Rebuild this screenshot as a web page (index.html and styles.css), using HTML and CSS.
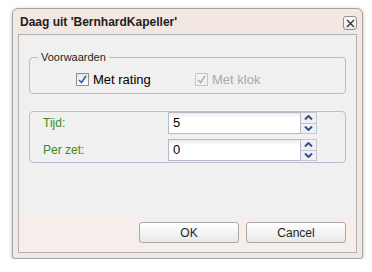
FILE: index.html
```html
<!DOCTYPE html>
<html lang="nl">
<head>
    <meta charset="UTF-8">
    <title>Daag uit</title>
    <link rel="stylesheet" href="styles.css">
</head>
<body>
    <div class="dialog">
        <div class="titlebar">
            <span class="title">Daag uit 'BernhardKapeller'</span>
            <button class="close" title="Sluiten">
                <svg width="9" height="9" viewBox="0 0 9 9"><path d="M1 1L8 8M8 1L1 8" stroke="#333" stroke-width="1.4"/></svg>
            </button>
        </div>

        <div class="panel">
            <div class="content">
                <fieldset class="group">
                    <legend>Voorwaarden</legend>
                    <div class="checks">
                        <label class="check">
                            <span class="box">
                                <svg width="9" height="9" viewBox="0 0 9 9"><path d="M1 5L3.5 7.5L8 1" fill="none" stroke="#3c5aa8" stroke-width="1.6"/></svg>
                            </span>
                            Met rating
                        </label>
                        <label class="check disabled">
                            <span class="box">
                                <svg width="9" height="9" viewBox="0 0 9 9"><path d="M1 5L3.5 7.5L8 1" fill="none" stroke="#a9b0c4" stroke-width="1.6"/></svg>
                            </span>
                            Met klok
                        </label>
                    </div>
                </fieldset>

                <div class="group fields">
                    <div class="row">
                        <span class="label">Tijd:</span>
                        <div class="spin">
                            <span class="value">5</span>
                            <div class="arrows">
                                <span class="arrow"><svg width="9" height="5" viewBox="0 0 9 5"><path d="M1 4.5L4.5 1L8 4.5" fill="none" stroke="#2f4f8f" stroke-width="2"/></svg></span>
                                <span class="arrow"><svg width="9" height="5" viewBox="0 0 9 5"><path d="M1 0.5L4.5 4L8 0.5" fill="none" stroke="#2f4f8f" stroke-width="2"/></svg></span>
                            </div>
                        </div>
                    </div>
                    <div class="row">
                        <span class="label">Per zet:</span>
                        <div class="spin">
                            <span class="value">0</span>
                            <div class="arrows">
                                <span class="arrow"><svg width="9" height="5" viewBox="0 0 9 5"><path d="M1 4.5L4.5 1L8 4.5" fill="none" stroke="#2f4f8f" stroke-width="2"/></svg></span>
                                <span class="arrow"><svg width="9" height="5" viewBox="0 0 9 5"><path d="M1 0.5L4.5 4L8 0.5" fill="none" stroke="#2f4f8f" stroke-width="2"/></svg></span>
                            </div>
                        </div>
                    </div>
                </div>
            </div>

            <div class="buttons">
                <button class="btn">OK</button>
                <button class="btn">Cancel</button>
            </div>
        </div>
    </div>
</body>
</html>
```

FILE: styles.css
```css
body {
    margin: 0;
    padding: 8px 0 0 12px;
    background: #ffffff;
    font-family: "Liberation Sans", Arial, sans-serif;
    font-size: 11px;
    color: #000;
}

.dialog {
    width: 339px;
    height: 244px;
    padding: 0 5px 5px 5px;
    border: 1px solid #a3a3a3;
    border-radius: 6px 6px 3px 3px;
    background: #f2e7e1;
    box-shadow: 0 1px 4px rgba(0, 0, 0, 0.25);
    display: flex;
    flex-direction: column;
}

.titlebar {
    height: 25px;
    display: flex;
    align-items: center;
    justify-content: space-between;
    padding-left: 2px;
}

.title {
    font-weight: bold;
    font-size: 12px;
    color: #1e1e1e;
    margin-top: 1px;
}

.close {
    width: 14px;
    height: 14px;
    padding: 0;
    margin-top: 3px;
    border: 1px solid #8f8f8f;
    border-radius: 3px;
    background: linear-gradient(#ffffff, #ececec);
    display: flex;
    align-items: center;
    justify-content: center;
}

.panel {
    flex: 1;
    border: 1px solid #b1b1b1;
    background: #f0f0f0;
    display: flex;
    flex-direction: column;
}

.content {
    flex: 1;
    padding: 16px 10px 0 10px;
}

.group {
    border: 1px solid #b8bccc;
    border-radius: 4px;
    margin: 0;
}

fieldset.group {
    padding: 8px 0 6px 0;
}

legend {
    padding: 0 3px;
    margin-left: 8px;
    color: #1e1e1e;
}

.checks {
    display: flex;
    height: 16px;
    padding-left: 46px;
}

.check {
    display: flex;
    align-items: center;
    gap: 4px;
    font-size: 13px;
    width: 119px;
}

.check.disabled {
    color: #a8a8a8;
}

.box {
    width: 11px;
    height: 11px;
    border: 1px solid #8e8f8f;
    background: linear-gradient(#e6e6e6, #ffffff);
    display: flex;
    align-items: center;
    justify-content: center;
}

.disabled .box {
    border-color: #c6c6c6;
    background: #f2f2f2;
}

.fields {
    margin-top: 17px;
    padding: 0 0 1px 13px;
}

.row {
    display: flex;
    align-items: center;
    height: 22px;
    margin-bottom: 5px;
}

.row:last-child {
    margin-bottom: 0;
}

.label {
    width: 125px;
    font-size: 12px;
    color: #3d8a1f;
}

.spin {
    display: flex;
    height: 22px;
}

.value {
    width: 133px;
    box-sizing: border-box;
    border: 1px solid #b6b9c8;
    background: linear-gradient(#eaeaea, #ffffff 5px);
    font-size: 13px;
    padding: 2px 0 0 4px;
}

.arrows {
    width: 16px;
    display: flex;
    flex-direction: column;
}

.arrow {
    flex: 1;
    box-sizing: border-box;
    border: 1px solid #c4c6d2;
    border-left: none;
    background: #f0f0f2;
    display: flex;
    align-items: center;
    justify-content: center;
}

.arrow + .arrow {
    border-top: none;
}

.buttons {
    height: 34px;
    box-sizing: border-box;
    padding: 4px 10px 0 0;
    background: #f5eeea;
    display: flex;
    justify-content: flex-end;
    gap: 7px;
}

.btn {
    width: 100px;
    height: 21px;
    border: 1px solid #a9a9a9;
    border-radius: 3px;
    background: linear-gradient(#ffffff, #f4f4f4 50%, #e8e8e8);
    font-family: "Liberation Sans", Arial, sans-serif;
    font-size: 12px;
    color: #1e1e1e;
    padding: 0;
}
```
